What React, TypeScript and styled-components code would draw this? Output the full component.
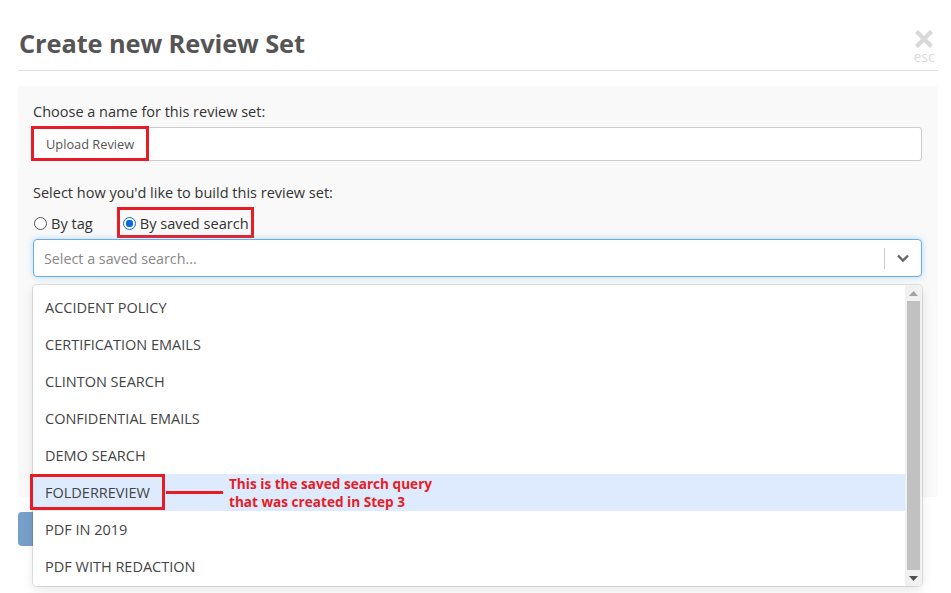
import styled, { createGlobalStyle } from "styled-components";

const GlobalStyle = createGlobalStyle`
  html, body {
    margin: 0;
    padding: 0;
    background: #ffffff;
    min-height: 100vh;
  }
  body {
    font-family: "Open Sans", "Noto Sans", "Liberation Sans", sans-serif;
    color: #333;
  }
`;

const savedSearches = [
  "ACCIDENT POLICY",
  "CERTIFICATION EMAILS",
  "CLINTON SEARCH",
  "CONFIDENTIAL EMAILS",
  "DEMO SEARCH",
  "FOLDERREVIEW",
  "PDF IN 2019",
  "PDF WITH REDACTION",
];

const ANNOTATION = "#e81c24";

const App = () => {
  return (
    <>
      <GlobalStyle />
      <Modal>
        <Header>
          <Title>Create new Review Set</Title>
          <Close>
            <svg width="18" height="18" viewBox="0 0 18 18">
              <path
                d="M3 3 L15 15 M15 3 L3 15"
                stroke="#d9d9d9"
                strokeWidth="4.4"
                strokeLinecap="square"
              />
            </svg>
            <Esc>esc</Esc>
          </Close>
        </Header>

        <Panel>
          <Label>Choose a name for this review set:</Label>
          <InputWrap>
            <TextInput defaultValue="Upload Review" />
            <Highlight style={{ left: -2, top: -1, width: 112, height: 29 }} />
          </InputWrap>

          <Label $top={22}>Select how you'd like to build this review set:</Label>
          <Radios>
            <RadioLabel>
              <Radio />
              By tag
            </RadioLabel>
            <RadioLabel $gap={30}>
              <Radio $checked />
              By saved search
              <Highlight style={{ left: -6, top: -4, width: 131, height: 25 }} />
            </RadioLabel>
          </Radios>

          <SelectWrap>
            <Select>
              <Placeholder>Select a saved search...</Placeholder>
              <Separator />
              <Chevron>
                <svg width="14" height="10" viewBox="0 0 14 10">
                  <path
                    d="M2 2.5 L7 7.5 L12 2.5"
                    fill="none"
                    stroke="#666"
                    strokeWidth="2.4"
                  />
                </svg>
              </Chevron>
            </Select>

            <Menu>
              <MenuList>
                {savedSearches.map((name) => (
                  <MenuItem key={name} $active={name === "FOLDERREVIEW"}>
                    {name}
                    {name === "FOLDERREVIEW" && (
                      <>
                        <Highlight
                          style={{ left: -3, top: 0, width: 129, height: 30 }}
                        />
                        <Callout>
                          <CalloutLine />
                          <CalloutText>
                            This is the saved search query
                            <br />
                            that was created in Step 3
                          </CalloutText>
                        </Callout>
                      </>
                    )}
                  </MenuItem>
                ))}
              </MenuList>
              <Scrollbar>
                <ScrollArrow>
                  <svg width="9" height="5" viewBox="0 0 9 5">
                    <path d="M0 5 L4.5 0 L9 5 Z" fill="#a3a3a3" />
                  </svg>
                </ScrollArrow>
                <Thumb />
                <ScrollArrow>
                  <svg width="9" height="5" viewBox="0 0 9 5">
                    <path d="M0 0 L9 0 L4.5 5 Z" fill="#505050" />
                  </svg>
                </ScrollArrow>
              </Scrollbar>
            </Menu>
          </SelectWrap>
        </Panel>

        <Footer>
          {/* label sits behind the open menu, so it is not drawn */}
          <PrimaryButton aria-label="Create" />
        </Footer>
      </Modal>
    </>
  );
};

export default App;

const Modal = styled.div`
  width: 920px;
  margin-left: 18px;
  min-height: 593px;
`;

const Header = styled.div`
  display: flex;
  justify-content: space-between;
  align-items: flex-start;
  height: 70px;
  border-bottom: 1px solid #e2e2e2;
`;

const Title = styled.h1`
  margin: 26px 0 0 1px;
  font-size: 25.4px;
  font-weight: 700;
  color: #555;
  letter-spacing: -0.1px;
`;

const Close = styled.div`
  display: flex;
  flex-direction: column;
  align-items: center;
  margin-top: 30px;
  margin-right: 2px;
  width: 24px;
`;

const Esc = styled.span`
  font-size: 14px;
  line-height: 14px;
  color: #dcdcdc;
  margin-top: 2px;
`;

const Panel = styled.div`
  margin-top: 15px;
  background: #f9f9f9;
  border-radius: 3px;
  padding: 16px 16px 0 15px;
  height: 411px;
  box-sizing: border-box;
`;

const Label = styled.div<{ $top?: number }>`
  margin-top: ${(p) => p.$top ?? 0}px;
  font-size: 14.5px;
  line-height: 20px;
  color: #333;
`;

const InputWrap = styled.div`
  position: relative;
  margin-top: 5px;
`;

const TextInput = styled.input`
  display: block;
  width: 100%;
  box-sizing: border-box;
  height: 34px;
  padding: 0 12px;
  border: 1px solid #ccc;
  border-radius: 3px;
  background: #fff;
  font-family: "Open Sans", "Liberation Sans", sans-serif;
  font-size: 12.8px;
  color: #555;
  outline: none;
`;

const Highlight = styled.div`
  position: absolute;
  border: 3px solid ${ANNOTATION};
  pointer-events: none;
`;

const Radios = styled.div`
  display: flex;
  align-items: center;
  margin-top: 8px;
  margin-left: 1px;
  height: 24px;
`;

const RadioLabel = styled.label<{ $gap?: number }>`
  position: relative;
  height: 24px;
  display: flex;
  align-items: center;
  gap: 4px;
  margin-left: ${(p) => p.$gap ?? 0}px;
  font-size: 14.6px;
  color: #333;
`;

const Radio = styled.span<{ $checked?: boolean }>`
  width: 13px;
  height: 13px;
  border-radius: 50%;
  box-sizing: border-box;
  border: 1px solid ${(p) => (p.$checked ? "#0a68e0" : "#555")};
  background: ${(p) =>
    p.$checked ? "radial-gradient(circle, #0a68e0 0 3.5px, #fff 4px)" : "#fff"};
`;

const SelectWrap = styled.div`
  position: relative;
  margin-top: 4px;
`;

const Select = styled.div`
  display: flex;
  align-items: center;
  height: 38px;
  box-sizing: border-box;
  background: #fff;
  border: 1px solid #66afe9;
  border-radius: 4px;
  box-shadow: 0 0 6px rgba(102, 175, 233, 0.45);
`;

const Placeholder = styled.span`
  flex: 1;
  padding-left: 10px;
  font-size: 14.3px;
  color: #888;
`;

const Separator = styled.span`
  width: 1px;
  height: 21px;
  background: #ccc;
`;

const Chevron = styled.span`
  display: flex;
  align-items: center;
  justify-content: center;
  width: 36px;
`;

const Menu = styled.div`
  position: absolute;
  top: calc(100% + 8px);
  left: 0;
  right: 0;
  height: 301px;
  display: flex;
  background: #fff;
  border-radius: 4px;
  box-shadow: 0 0 0 1px rgba(0, 0, 0, 0.1), 0 4px 11px rgba(0, 0, 0, 0.1);
  z-index: 10;
`;

const MenuList = styled.div`
  flex: 1;
  padding-top: 4px;
`;

const MenuItem = styled.div<{ $active?: boolean }>`
  position: relative;
  height: 37px;
  display: flex;
  align-items: center;
  padding-left: 12px;
  font-size: 14.5px;
  color: #444;
  background: ${(p) => (p.$active ? "#deebff" : "transparent")};
`;

const Callout = styled.div`
  position: absolute;
  left: 133px;
  top: 0;
  height: 37px;
  display: flex;
  align-items: center;
`;

const CalloutLine = styled.span`
  width: 57px;
  height: 3px;
  background: ${ANNOTATION};
`;

const CalloutText = styled.div`
  margin-left: 6px;
  font-family: "Open Sans", "Liberation Sans", sans-serif;
  font-size: 13.6px;
  font-weight: 700;
  line-height: 18px;
  color: ${ANNOTATION};
  white-space: nowrap;
`;

const Scrollbar = styled.div`
  width: 17px;
  display: flex;
  flex-direction: column;
  background: #f1f1f1;
  border-radius: 0 4px 4px 0;
`;

const ScrollArrow = styled.div`
  height: 16px;
  display: flex;
  align-items: center;
  justify-content: center;
`;

const Thumb = styled.div`
  flex: 1;
  margin: 0 2px;
  background: #c1c1c1;
`;

const Footer = styled.div`
  margin-top: 15px;
`;

const PrimaryButton = styled.button`
  display: block;
  width: 80px;
  height: 34px;
  border: none;
  border-radius: 4px;
  background: #76a0c9;
`;
